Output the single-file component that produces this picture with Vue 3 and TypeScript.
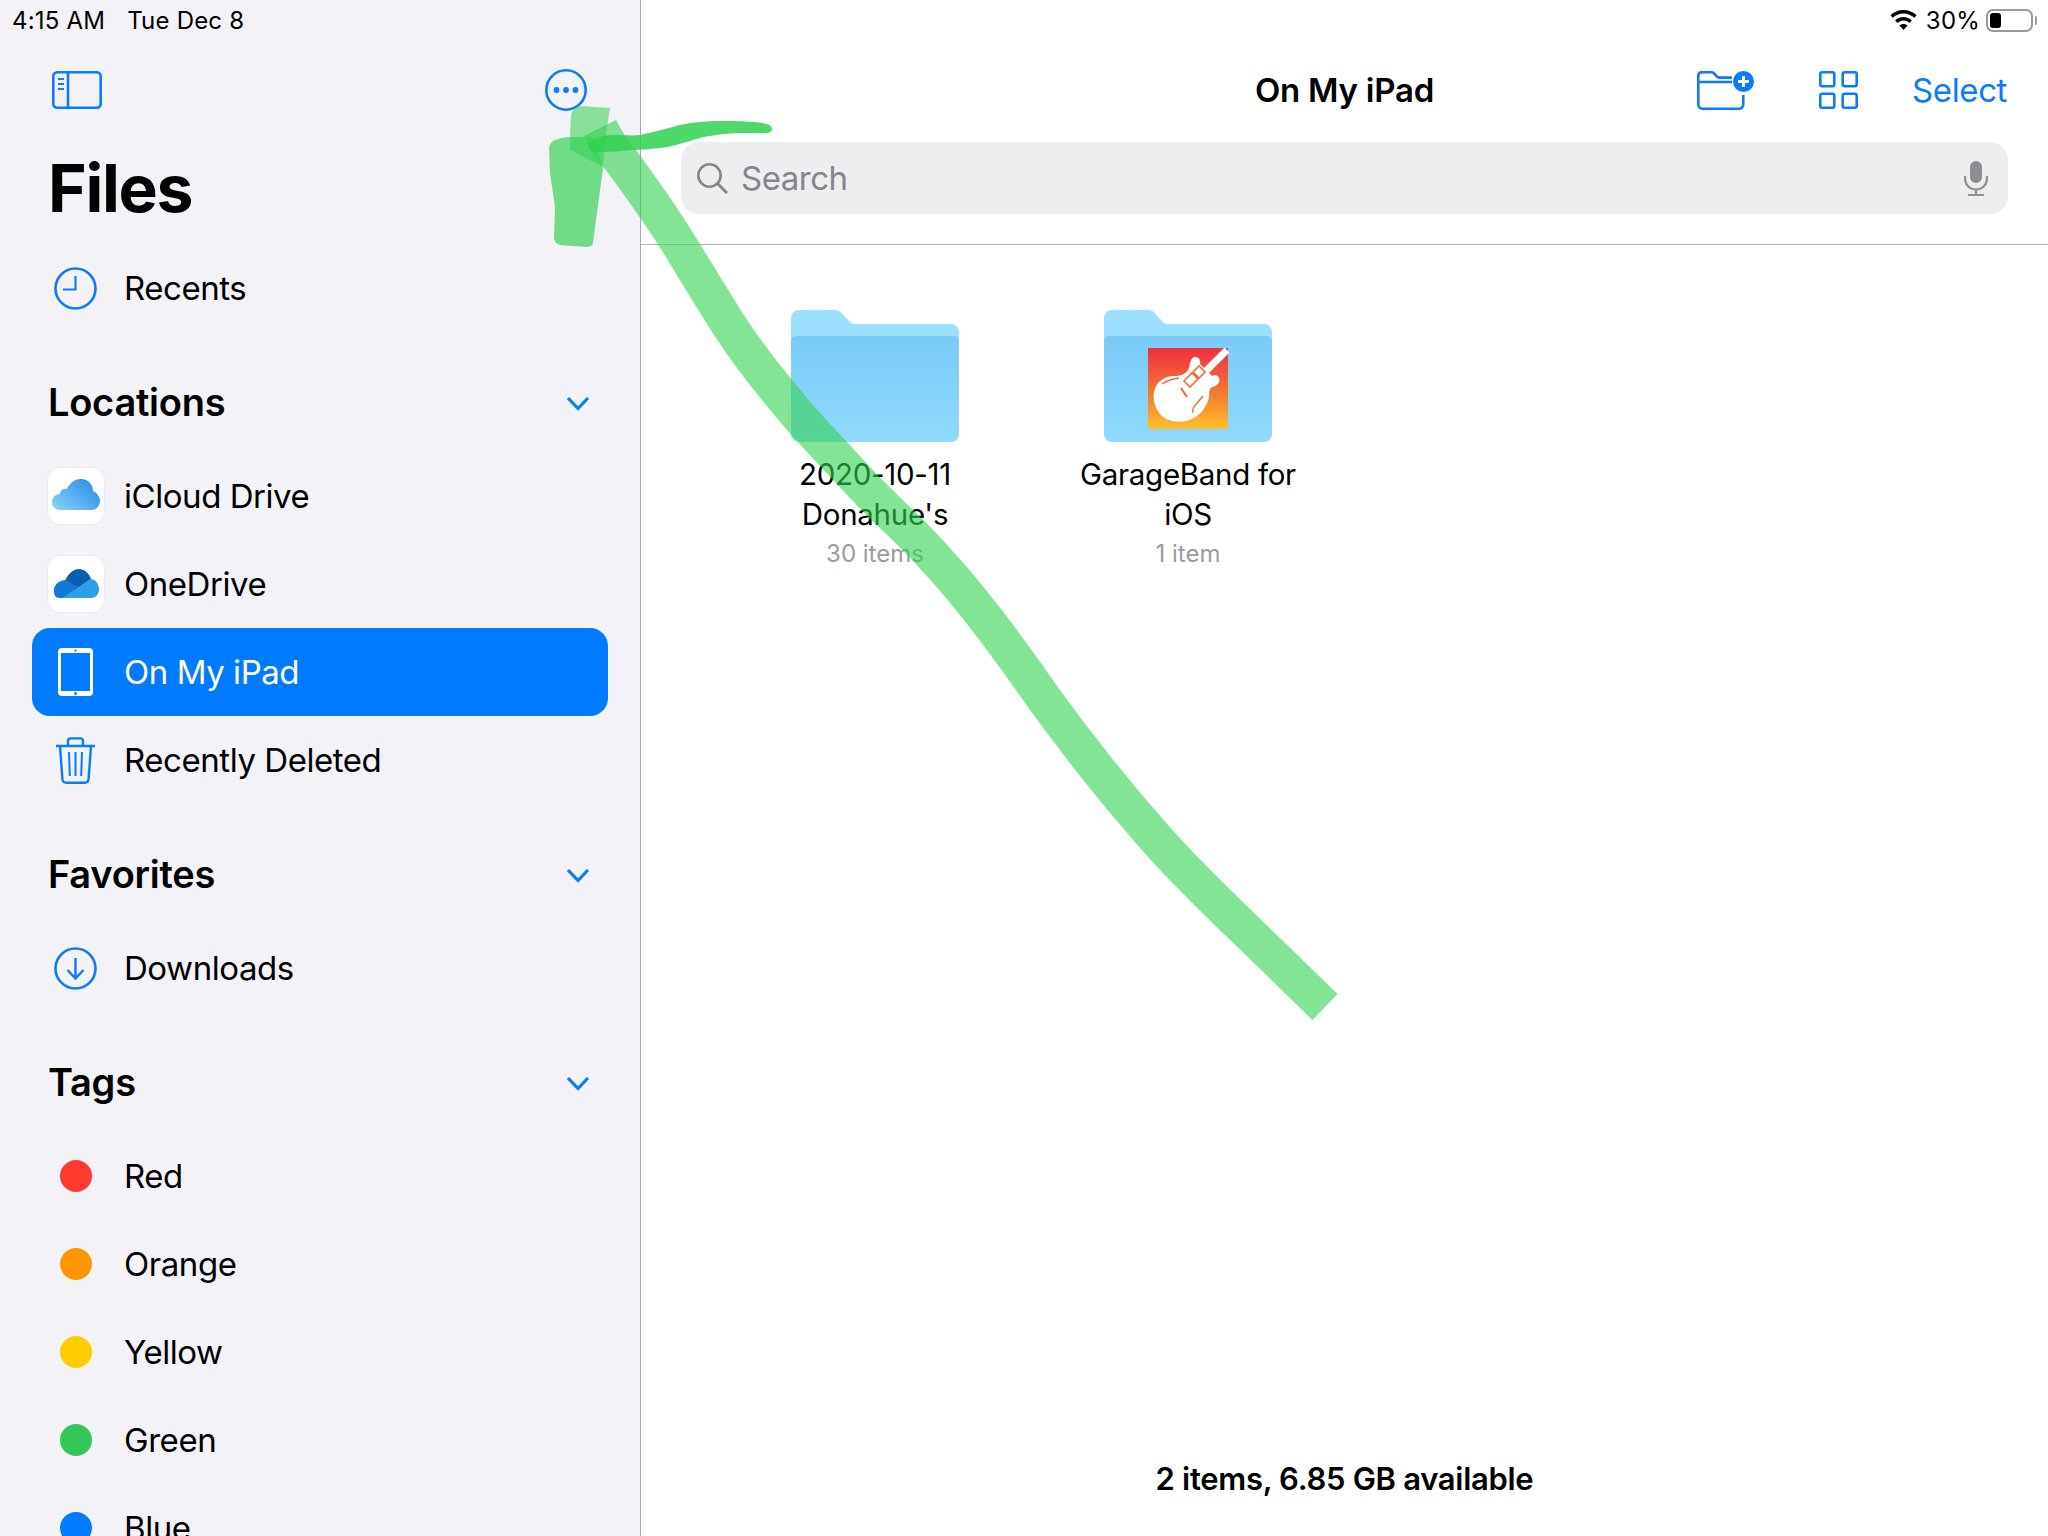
<script setup lang="ts">
type Row = { label: string; icon: string; active?: boolean };

const locations: Row[] = [
  { label: "iCloud Drive", icon: "icloud" },
  { label: "OneDrive", icon: "onedrive" },
  { label: "On My iPad", icon: "ipad", active: true },
  { label: "Recently Deleted", icon: "trash" },
];

const tags = [
  { label: "Red", color: "#ff3b30" },
  { label: "Orange", color: "#ff9500" },
  { label: "Yellow", color: "#ffcc00" },
  { label: "Green", color: "#34c759" },
  { label: "Blue", color: "#007aff" },
];

const folders = [
  { name: "2020-10-11 Donahue's", count: "30 items", app: false },
  { name: "GarageBand for iOS", count: "1 item", app: true },
];
</script>

<template>
  <div class="page">
    <aside class="sidebar">
      <div class="status">
        <span>4:15 AM</span>
        <span>Tue Dec 8</span>
      </div>
      <div class="side-toolbar">
        <svg width="50" height="38" viewBox="0 0 50 38" fill="none" stroke="#0a7aff" stroke-width="2.6">
          <rect x="1.3" y="1.3" width="47.4" height="35.4" rx="4" />
          <path d="M16 1v36" />
          <path d="M6 8h6M6 13h6M6 18h6" stroke-width="2" />
        </svg>
        <svg width="42" height="42" viewBox="0 0 42 42" fill="none">
          <circle cx="21" cy="21" r="19.7" stroke="#0a7aff" stroke-width="2.6" />
          <circle cx="11.5" cy="21" r="2.9" fill="#0a7aff" />
          <circle cx="21" cy="21" r="2.9" fill="#0a7aff" />
          <circle cx="30.5" cy="21" r="2.9" fill="#0a7aff" />
        </svg>
      </div>
      <h1 class="title">Files</h1>

      <div class="row">
        <span class="row-icon">
          <svg width="43" height="43" viewBox="0 0 43 43" fill="none" stroke="#0a7aff" stroke-width="2.6">
            <circle cx="21.5" cy="21.5" r="20" />
            <path d="M21.5 9v13.5H9" stroke-width="2.2" />
          </svg>
        </span>
        <span>Recents</span>
      </div>

      <div class="section">
        <span>Locations</span>
        <svg class="chevron" width="24" height="15" viewBox="0 0 24 15" fill="none" stroke="#0a7aff" stroke-width="3.2">
          <path d="M2 2l10 10.5L22 2" />
        </svg>
      </div>
      <div v-for="row in locations" :key="row.label" class="row" :class="{ active: row.active }">
        <span class="row-icon">
          <span v-if="row.icon === 'icloud'" class="tile">
            <svg width="56" height="56" viewBox="0 0 56 56">
              <defs>
                <linearGradient id="cloud" x1="0" y1="1" x2="1" y2="0.2">
                  <stop offset="0" stop-color="#8ad6f8" />
                  <stop offset="1" stop-color="#2a8ce6" />
                </linearGradient>
              </defs>
              <path fill="url(#cloud)" d="M12 42C7 42 4 38 4 34c0-5 4-8 8-8 0-4 4-6 7-5 3-7 9-10 14-10 7 0 12 5 12 12 4 2 7 6 7 10 0 5-4 9-8 9z" />
            </svg>
          </span>
          <span v-else-if="row.icon === 'onedrive'" class="tile">
            <svg width="56" height="56" viewBox="0 0 56 56">
              <path fill="#0a5fb0" d="M17 25c3-8 9-12 14-12 5 0 10 4 12 10L30 32z" />
              <path fill="#1079d3" d="M6 36c-1-7 5-12 12-12l13 8-14 10h-6c-3 0-5-3-5-6z" />
              <path fill="#2aa0e6" d="M43 23c5 1 8 5 8 10s-3 9-8 9H14l17-11z" />
            </svg>
          </span>
          <svg v-else-if="row.icon === 'ipad'" width="35" height="48" viewBox="0 0 35 48">
            <rect width="35" height="48" rx="4" fill="#fff" />
            <rect x="3" y="5" width="29" height="38" fill="#007aff" />
            <circle cx="17.5" cy="2.6" r="1.1" fill="#007aff" />
            <circle cx="17.5" cy="45.4" r="1.5" fill="#007aff" />
          </svg>
          <svg v-else width="41" height="47" viewBox="0 0 41 47" fill="none" stroke="#0a7aff" stroke-width="2.4">
            <path d="M1 9h39" />
            <path d="M13 8V4c0-1.6 1-2.6 2.6-2.6h9.8C27 1.4 28 2.4 28 4v4" />
            <path d="M5 9l2.4 33c.2 2.4 1.6 3.8 4 3.8h18.2c2.4 0 3.8-1.4 4-3.8L36 9" />
            <path d="M14 15l.8 24M20.5 15v24M27 15l-.8 24" stroke-width="2" />
          </svg>
        </span>
        <span>{{ row.label }}</span>
      </div>

      <div class="section">
        <span>Favorites</span>
        <svg class="chevron" width="24" height="15" viewBox="0 0 24 15" fill="none" stroke="#0a7aff" stroke-width="3.2">
          <path d="M2 2l10 10.5L22 2" />
        </svg>
      </div>
      <div class="row">
        <span class="row-icon">
          <svg width="43" height="43" viewBox="0 0 43 43" fill="none" stroke="#0a7aff" stroke-width="2.6">
            <circle cx="21.5" cy="21.5" r="20" />
            <path d="M21.5 11v20M13.5 23l8 8.5 8-8.5" stroke-width="2.4" />
          </svg>
        </span>
        <span>Downloads</span>
      </div>

      <div class="section">
        <span>Tags</span>
        <svg class="chevron" width="24" height="15" viewBox="0 0 24 15" fill="none" stroke="#0a7aff" stroke-width="3.2">
          <path d="M2 2l10 10.5L22 2" />
        </svg>
      </div>
      <div v-for="tag in tags" :key="tag.label" class="row">
        <span class="row-icon">
          <span class="dot" :style="{ background: tag.color }"></span>
        </span>
        <span>{{ tag.label }}</span>
      </div>
    </aside>

    <main class="main">
      <div class="status status-right">
        <svg width="27" height="20" viewBox="0 0 27 20" fill="#000">
          <path d="M13.5 0C8.4 0 3.8 2 .4 5.3l2.3 2.5C5.5 5 9.3 3.4 13.5 3.4s8 1.6 10.8 4.4l2.3-2.5C23.2 2 18.6 0 13.5 0z" />
          <path d="M13.5 7c-3.2 0-6.2 1.3-8.4 3.4l2.4 2.5c1.6-1.5 3.7-2.5 6-2.5s4.4 1 6 2.5l2.4-2.5C19.7 8.3 16.7 7 13.5 7z" />
          <path d="M13.5 14c-1.6 0-3 .6-4.1 1.6l4.1 4.4 4.1-4.4c-1.1-1-2.5-1.6-4.1-1.6z" />
        </svg>
        <span class="percent">30%</span>
        <span class="battery"><span class="battery-fill"></span></span>
        <span class="battery-nub"></span>
      </div>

      <div class="toolbar">
        <span></span>
        <span class="view-title">On My iPad</span>
        <div class="actions">
          <svg width="57" height="39" viewBox="0 0 57 39" fill="none">
            <path d="M1.3 9V5c0-2.2 1.4-3.7 3.7-3.7h9.5c1.5 0 2.3.6 3.3 1.8l1.7 2c.9 1.1 1.7 1.5 3.2 1.5H35" stroke="#0a7aff" stroke-width="2.6" />
            <path d="M1.3 9v24c0 2.5 1.4 4.700 4 4.700h37c2.600 0 4-2.200 4-4.700V24M1.300 11H35" stroke="#0a7aff" stroke-width="2.6" />
            <circle cx="46.5" cy="10.5" r="10.5" fill="#0a7aff" />
            <path d="M46.5 5v11M41 10.5h11" stroke="#fff" stroke-width="2.8" />
          </svg>
          <svg class="grid-icon" width="39" height="38" viewBox="0 0 39 38" fill="none" stroke="#0a7aff" stroke-width="2.6">
            <rect x="1.3" y="1.3" width="14" height="14" rx="2" />
            <rect x="23.7" y="1.3" width="14" height="14" rx="2" />
            <rect x="1.3" y="22.7" width="14" height="14" rx="2" />
            <rect x="23.7" y="22.7" width="14" height="14" rx="2" />
          </svg>
          <span class="select">Select</span>
        </div>
      </div>

      <div class="search">
        <svg width="31" height="31" viewBox="0 0 31 31" fill="none" stroke="#85858b" stroke-width="2.6">
          <circle cx="12.5" cy="12.5" r="11.2" />
          <path d="M20.5 20.5L30 30" stroke-width="3" />
        </svg>
        <span class="search-text">Search</span>
        <svg class="mic" width="24" height="35" viewBox="0 0 24 35" fill="none" stroke="#8e8e93" stroke-width="2.2">
          <rect x="6" y="0" width="12" height="22" rx="6" fill="#8e8e93" stroke="none" />
          <path d="M1.1 15v3c0 6 5 10.5 10.9 10.5S22.9 24 22.9 18v-3M12 28.5V34M4 34h16" />
        </svg>
      </div>

      <div class="folders">
        <div v-for="folder in folders" :key="folder.name" class="folder">
          <svg class="folder-icon" width="168" height="132" viewBox="0 0 168 132">
            <defs>
              <linearGradient id="front" x1="0" y1="0" x2="0" y2="1">
                <stop offset="0" stop-color="#79cbf7" />
                <stop offset="1" stop-color="#90dafd" />
              </linearGradient>
              <linearGradient id="band" x1="0" y1="0" x2="0" y2="1">
                <stop offset="0" stop-color="#ee2f42" />
                <stop offset="0.6" stop-color="#f67f2f" />
                <stop offset="1" stop-color="#fdc02b" />
              </linearGradient>
            </defs>
            <path fill="#9ddfff" d="M0 8c0-4.5 3.5-8 8-8h36c3 0 5 1 7 3.5l7 7.5c1.8 2.2 3.5 3 6 3h96c4.5 0 8 3.5 8 8V40H0z" />
            <path fill="url(#front)" d="M0 32c0-4.5 2-6 6-6h156c4 0 6 1.5 6 6v92c0 4.5-3.5 8-8 8H8c-4.5 0-8-3.5-8-8z" />
            <g v-if="folder.app" transform="translate(44 38)">
              <rect width="80" height="81" fill="url(#band)" />
              <path d="M79 2L52 29" stroke="#fff" stroke-width="7" />
              <path fill="#fff" d="M47 9c4 0 6 3 5 7l8 8 4 4c4-2 9 0 7 6-1 4-7 4-9 7-2 5 1 8-4 16-6 13-20 19-34 16C10 70 4 55 6 44c2-10 10-16 20-16 8 0 12-2 15-8 1-5 2-11 6-11z" />
              <g fill="none" stroke="#f2693a">
                <path d="M36 33l8-8 6 6-8 8zM45 24l6-6 6 6-6 6z" stroke-width="1.6" />
                <path d="M33 40l6 9" stroke-width="2.2" />
                <path d="M14 36c5-3 9-5 17-6M45 65c-2-6 5-10 10-17" stroke-width="1.4" />
              </g>
            </g>
          </svg>
          <div class="folder-name">{{ folder.name }}</div>
          <div class="folder-count">{{ folder.count }}</div>
        </div>
      </div>

      <div class="footer">2 items, 6.85 GB available</div>
    </main>

    <svg class="scribble" width="2048" height="1536" viewBox="0 0 2048 1536" fill="none">
      <path fill="#32d250" fill-opacity="0.55" d="M570 137L571 115Q573 106 582 106L610 108L607 127L603 167L570 150Z" />
      <path fill="#32d250" fill-opacity="0.68" d="M549 148Q550 142 555 140Q562 137 570 137L593 137L603 168L593 243Q592 247 587 247L560 245Q554 243 554 238L555 207L550 173Z" />
      <path stroke="#32d250" stroke-opacity="0.6" stroke-width="36" d="M600 128Q610 148 621 160Q643 190 660 215Q677 240 693 267Q710 295 727 322Q745 350 765 375Q785 400 803 421Q822 442 841 462Q860 483 875 498Q890 513 910 532Q930 552 950 575Q970 598 996 632Q1022 667 1045 700Q1069 733 1095 766Q1122 800 1151 833Q1180 867 1252 936L1325 1007" />
      <path fill="#2fd14e" fill-opacity="0.85" d="M588 143C596 138 604 135 612 135C624 135 632 136 640 135C655 132 668 128 680 125C694 122 706 121 720 121C732 121 744 121 753 122C764 123 772 124 772 129C772 133 766 134 755 133C748 133 742 133 737 133C720 134 706 136 693 140C680 144 670 147 660 148C650 149 640 150 630 150C620 151 610 152 600 152C594 152 590 150 588 147Z" />
    </svg>
  </div>
</template>

<style>
html,
body {
  margin: 0;
  background: #fff;
}
</style>

<style scoped>
.page {
  position: relative;
  display: flex;
  width: 2048px;
  height: 1536px;
  overflow: hidden;
  font-family: Inter, "Liberation Sans", sans-serif;
  color: #000;
  background: #fff;
}

.sidebar {
  flex: none;
  width: 641px;
  height: 1536px;
  box-sizing: border-box;
  overflow: hidden;
  background: #f2f2f7;
  border-right: 1px solid #a9a9ad;
}

.status {
  display: flex;
  align-items: center;
  gap: 22px;
  height: 40px;
  padding-left: 12px;
  font-size: 24px;
  letter-spacing: 0.2px;
}

.side-toolbar {
  display: flex;
  align-items: center;
  justify-content: space-between;
  height: 60px;
  margin-top: 20px;
  padding: 0 53px 0 52px;
}

.title {
  display: flex;
  align-items: center;
  height: 124px;
  margin: 0;
  padding: 12px 0 0 48px;
  font-size: 66px;
  font-weight: 700;
  letter-spacing: -1.3px;
  box-sizing: border-box;
}

.row {
  display: flex;
  align-items: center;
  height: 88px;
  margin: 0 32px;
  border-radius: 18px;
  font-size: 33px;
  letter-spacing: -0.45px;
}

.row.active {
  background: #007aff;
  color: #fff;
}

.row-icon {
  display: flex;
  flex: none;
  align-items: center;
  justify-content: center;
  width: 87px;
  margin-right: 5px;
}

.tile {
  display: block;
  width: 56px;
  height: 56px;
  border-radius: 13px;
  background: #fff;
  box-shadow: 0 0 0 1px #ebebef;
}

.tile svg {
  display: block;
}

.dot {
  display: block;
  width: 32px;
  height: 32px;
  border-radius: 50%;
}

.section {
  display: flex;
  align-items: center;
  justify-content: space-between;
  height: 100px;
  padding: 20px 50px 0 48px;
  font-size: 38px;
  font-weight: 600;
  letter-spacing: -0.25px;
}

.chevron {
  margin-top: 2px;
}

.main {
  display: flex;
  flex: 1;
  flex-direction: column;
  min-width: 0;
}

.status-right {
  justify-content: flex-end;
  gap: 0;
  padding: 0 11px 0 0;
}

.percent {
  margin: 0 6px 0 9px;
}

.battery {
  display: block;
  box-sizing: border-box;
  width: 47px;
  height: 23px;
  padding: 2px;
  border: 2px solid #9a9a9a;
  border-radius: 7px;
}

.battery-fill {
  display: block;
  width: 11px;
  height: 15px;
  border-radius: 3px;
  background: #000;
}

.battery-nub {
  display: block;
  width: 2px;
  height: 9px;
  margin-left: 2px;
  border-radius: 0 2px 2px 0;
  background: #9a9a9a;
}

.toolbar {
  display: grid;
  grid-template-columns: 1fr auto 1fr;
  align-items: center;
  height: 60px;
  margin-top: 20px;
}

.view-title {
  font-size: 33px;
  font-weight: 600;
  letter-spacing: -0.25px;
}

.actions {
  display: flex;
  align-items: center;
  justify-content: flex-end;
  padding-right: 41px;
}

.grid-icon {
  margin-left: 65px;
}

.select {
  margin-left: 54px;
  font-size: 33px;
  color: #0a7aff;
  letter-spacing: -0.4px;
}

.search {
  display: flex;
  align-items: center;
  height: 72px;
  margin: 22px 40px 30px 40px;
  padding: 0 20px 0 16px;
  border-radius: 18px;
  background: #eeeef1;
}

.search-text {
  margin-left: 13px;
  font-size: 33px;
  color: #85858b;
  letter-spacing: -0.5px;
}

.mic {
  margin-left: auto;
}

.folders {
  display: flex;
  gap: 13px;
  padding: 65px 0 0 84px;
  border-top: 1px solid #b5b5b8;
}

.folder {
  display: flex;
  flex-direction: column;
  align-items: center;
  width: 300px;
  text-align: center;
}

.folder-icon {
  display: block;
  margin-bottom: 12px;
}

.folder-name {
  width: 240px;
  font-size: 29.5px;
  line-height: 40px;
  letter-spacing: -0.3px;
}

.folder-count {
  margin-top: 5px;
  font-size: 24px;
  line-height: 30px;
  color: #9b9ba0;
}

.footer {
  margin-top: auto;
  padding-bottom: 39px;
  font-size: 31px;
  font-weight: 600;
  line-height: 36px;
  text-align: center;
  letter-spacing: -0.3px;
}

.scribble {
  position: absolute;
  top: 0;
  left: 0;
  filter: blur(0.6px);
  pointer-events: none;
}
</style>
